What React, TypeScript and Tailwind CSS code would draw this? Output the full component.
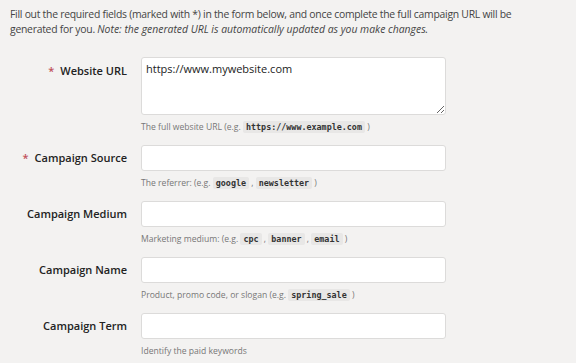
import React from "react";

const Code = ({ children }: { children: React.ReactNode }) => (
  <code className="rounded-[2px] bg-[#e8e7e6] px-[3px] py-[1px] font-['DejaVu_Sans_Mono',monospace] text-[8.4px] font-bold text-[#333]">
    {children}
  </code>
);

const fields = [
  { label: "Campaign Source", required: true, help: <>The referrer: (e.g. <Code>google</Code> , <Code>newsletter</Code> )</> },
  { label: "Campaign Medium", required: false, help: <>Marketing medium: (e.g. <Code>cpc</Code> , <Code>banner</Code> , <Code>email</Code> )</> },
  { label: "Campaign Name", required: false, help: <>Product, promo code, or slogan (e.g. <Code>spring_sale</Code> )</> },
  { label: "Campaign Term", required: false, help: <>Identify the paid keywords</> },
];

const Label = ({ text, required }: { text: string; required: boolean }) => (
  <label className="block w-[127px] shrink-0 text-right text-[11px] font-semibold leading-[16px] text-[#222]">
    {required && <span className="mr-[6px] text-[#c0505a]">*</span>}
    {text}
  </label>
);

export default function App() {
  return (
    <div className="h-[363px] w-[576px] overflow-hidden bg-[#f3f2f1] font-['Open_Sans',sans-serif]">
      <p className="whitespace-nowrap px-[10px] pt-[7px] text-[10.4px] leading-[15px] tracking-[-0.26px] text-[#444]">
        Fill out the required fields (marked with *) in the form below, and once complete the full campaign URL will be
        <br />
        generated for you. <em className="tracking-normal">Note: the generated URL is automatically updated as you make changes.</em>
      </p>

      <div className="mt-[20px] flex flex-col">
        {/* website url */}
        <div className="flex gap-[14px]">
          <div className="pt-[6px]">
            <Label text="Website URL" required />
          </div>
          <div>
            <textarea
              defaultValue="https://www.mywebsite.com"
              className="block h-[58px] w-[305px] resize-y rounded-[3px] border border-[#dcdbda] bg-white px-[4px] py-[4px] text-[11px] leading-[14px] text-[#222] outline-none"
            />
            <p className="mt-[6px] text-[8.6px] leading-[12px] text-[#777]">
              The full website URL (e.g. <Code>https://www.example.com</Code> )
            </p>
          </div>
        </div>

        {fields.map((f, idx) => (
          <div key={idx} className="mt-[12px] flex items-start gap-[14px]">
            <div className="pt-[5px]">
              <Label text={f.label} required={f.required} />
            </div>
            <div>
              <input
                type="text"
                className="block h-[26px] w-[305px] rounded-[3px] border border-[#dcdbda] bg-white px-[4px] outline-none"
              />
              <p className="mt-[6px] text-[8.6px] leading-[12px] text-[#777]">{f.help}</p>
            </div>
          </div>
        ))}
      </div>
    </div>
  );
}
